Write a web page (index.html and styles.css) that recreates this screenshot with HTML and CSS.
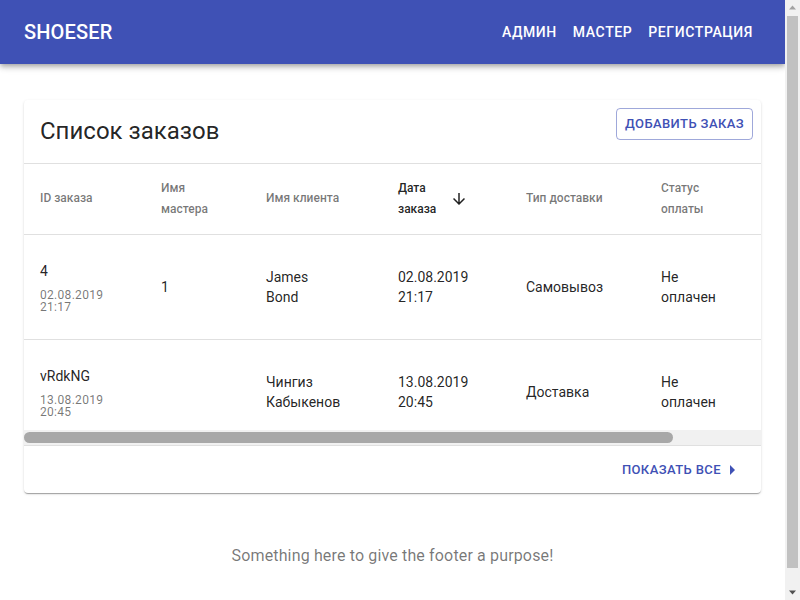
FILE: index.html
```html
<!DOCTYPE html>
<html lang="ru">
<head>
<meta charset="utf-8">
<title>Shoeser</title>
<link rel="stylesheet" href="styles.css">
</head>
<body>
<header class="appbar">
  <div class="brand">SHOESER</div>
  <nav class="nav">
    <a class="nav-link" href="#">Админ</a>
    <a class="nav-link" href="#">Мастер</a>
    <a class="nav-link" href="#">Регистрация</a>
  </nav>
</header>
<main class="main">
  <section class="card">
    <div class="card-head">
      <h1 class="card-title">Список заказов</h1>
      <button class="btn-outlined" type="button">Добавить заказ</button>
    </div>
    <div class="table-wrap">
      <table class="orders">
        <colgroup>
          <col class="c1"><col class="c2"><col class="c3"><col class="c4"><col class="c5"><col class="c6"><col class="c7">
        </colgroup>
        <thead>
          <tr>
            <th class="p1">ID заказа</th>
            <th class="p2">Имя мастера</th>
            <th class="p3">Имя клиента</th>
            <th class="p4 active">
              <span class="sort">
                <span class="sort-text">Дата заказа</span>
                <svg class="sort-icon" viewBox="0 0 24 24" width="18" height="18"><path d="M20 12l-1.41-1.41L13 16.17V4h-2v12.17l-5.58-5.59L4 12l8 8 8-8z"/></svg>
              </span>
            </th>
            <th class="p5">Тип доставки</th>
            <th class="p6">Статус оплаты</th>
            <th class="p7"></th>
          </tr>
        </thead>
        <tbody>
          <tr>
            <td class="p1"><div class="oid">4</div><div class="odate">02.08.2019 21:17</div></td>
            <td class="p2">1</td>
            <td class="p3">James Bond</td>
            <td class="p4">02.08.2019 21:17</td>
            <td class="p5">Самовывоз</td>
            <td class="p6">Не оплачен</td>
            <td class="p7"></td>
          </tr>
          <tr>
            <td class="p1"><div class="oid">vRdkNG</div><div class="odate">13.08.2019 20:45</div></td>
            <td class="p2"></td>
            <td class="p3">Чингиз Кабыкенов</td>
            <td class="p4">13.08.2019 20:45</td>
            <td class="p5">Доставка</td>
            <td class="p6">Не оплачен</td>
            <td class="p7"></td>
          </tr>
        </tbody>
      </table>
    </div>
    <div class="hscroll"><div class="hscroll-thumb" style="width: 88%"></div></div>
    <div class="card-foot">
      <button class="btn-text" type="button">Показать все
        <svg class="btn-icon" viewBox="0 0 24 24" width="24" height="24"><path d="M10 17l5-5-5-5v10z"/></svg>
      </button>
    </div>
  </section>
</main>
<footer class="footer">
  <p class="footer-text">Something here to give the footer a purpose!</p>
</footer>
<div class="vscroll" aria-hidden="true">
  <div class="vs-btn"><svg viewBox="0 0 15 15" width="15" height="15"><path class="vs-up" d="M4 9.5h7L7.5 5.5z"/></svg></div>
  <div class="vs-thumb"></div>
  <div class="vs-space"></div>
  <div class="vs-btn"><svg viewBox="0 0 15 15" width="15" height="15"><path class="vs-down" d="M4 5.5h7L7.5 9.5z"/></svg></div>
</div>
</body>
</html>
```

FILE: styles.css
```css
* { box-sizing: border-box; }
html, body { margin: 0; padding: 0; }
body {
  font-family: Roboto, "Noto Sans", "Liberation Sans", sans-serif;
  background: #fff;
  color: rgba(0,0,0,0.87);
  margin-right: 15px;
}
.vscroll {
  position: fixed;
  top: 0;
  right: 0;
  width: 15px;
  height: 100vh;
  background: #f1f1f1;
  display: flex;
  flex-direction: column;
  z-index: 10;
}
.vs-btn { height: 15px; flex: none; }
.vs-btn svg { display: block; }
.vs-up { fill: #a3a3a3; }
.vs-down { fill: #505050; }
.vs-thumb {
  height: 552px;
  margin: 1px 2px 0;
  background: #c1c1c1;
  flex: none;
}
.vs-space { flex: 1; }
.appbar {
  height: 64px;
  background: #3f51b5;
  color: #fff;
  display: flex;
  align-items: center;
  justify-content: space-between;
  padding: 0 24px;
  box-shadow: 0 2px 4px -1px rgba(0,0,0,0.2), 0 4px 5px 0 rgba(0,0,0,0.14), 0 1px 10px 0 rgba(0,0,0,0.12);
  position: relative;
  z-index: 2;
}
.brand {
  font-size: 20px;
  font-weight: 500;
  letter-spacing: 0.15px;
  line-height: 32px;
}
.nav { display: flex; }
.nav-link {
  color: #fff;
  text-decoration: none;
  text-transform: uppercase;
  font-size: 14px;
  font-weight: 500;
  letter-spacing: 0.6px;
  padding: 6px 8px;
  line-height: 24px;
}
.main { padding: 36px 24px 0; }
.card {
  background: #fff;
  border-radius: 4px;
  box-shadow: 0 2px 1px -1px rgba(0,0,0,0.2), 0 1px 1px 0 rgba(0,0,0,0.14), 0 1px 3px 0 rgba(0,0,0,0.12);
  overflow: hidden;
}
.card-head {
  height: 64px;
  display: flex;
  justify-content: space-between;
  align-items: flex-start;
  padding: 8px 8px 0 16px;
  border-bottom: 1px solid #e0e0e0;
}
.card-title {
  margin: 7px 0 0;
  font-size: 24px;
  font-weight: 400;
  line-height: 32px;
  color: rgba(0,0,0,0.87);
}
.btn-outlined {
  font-family: inherit;
  background: transparent;
  border: 1px solid rgba(63,81,181,0.5);
  border-radius: 4px;
  color: #3f51b5;
  text-transform: uppercase;
  font-size: 13px;
  font-weight: 500;
  letter-spacing: 0.4px;
  line-height: 20px;
  padding: 5px 8px;
  height: 32px;
}
.table-wrap {
  height: 266px;
  overflow: hidden;
}
.hscroll {
  height: 15px;
  background: #f1f1f1;
  padding: 2px 0;
}
.hscroll-thumb {
  height: 11px;
  background: #a8a8a8;
  border-radius: 6px;
}
.orders {
  width: 837px;
  table-layout: fixed;
  border-collapse: collapse;
}
.c1 { width: 121px; }
.c2 { width: 105px; }
.c3 { width: 132px; }
.c4 { width: 128px; }
.c5 { width: 135px; }
.c6 { width: 132px; }
.c7 { width: 84px; }
.orders th, .orders td {
  text-align: left;
  vertical-align: middle;
  border-bottom: 1px solid #e0e0e0;
  padding: 4px 24px 4px 16px;
}
.orders th {
  height: 70px;
  font-size: 12px;
  font-weight: 500;
  line-height: 21px;
  color: rgba(0,0,0,0.54);
}
.orders th.active { color: rgba(0,0,0,0.87); }
.orders td {
  height: 105px;
  font-size: 14px;
  font-weight: 400;
  line-height: 20px;
  color: rgba(0,0,0,0.87);
}
.orders .p3 { padding-right: 40px; }
.orders .p4 { padding-right: 38px; }
.orders .p5 { padding-right: 32px; }
.orders .p6 { padding-right: 56px; }
.sort { display: flex; align-items: center; }
.sort-text { flex: 1; }
.sort-icon { fill: rgba(0,0,0,0.87); margin: 0 4px; flex: none; }
.oid { font-size: 14px; line-height: 20px; }
.odate {
  margin-top: 8px;
  font-size: 12px;
  line-height: 12px;
  color: rgba(0,0,0,0.54);
  letter-spacing: 0.3px;
}
.card-foot {
  height: 48px;
  display: flex;
  justify-content: flex-end;
  align-items: center;
  padding: 0 16px;
  border-top: 1px solid #e0e0e0;
}
.btn-text {
  font-family: inherit;
  background: transparent;
  border: 0;
  color: #3f51b5;
  text-transform: uppercase;
  font-size: 13px;
  font-weight: 500;
  letter-spacing: 0.4px;
  line-height: 22px;
  padding: 4px 0 4px 5px;
  display: flex;
  align-items: center;
}
.btn-icon { fill: #3f51b5; margin-left: -1px; margin-right: 1px; }
.footer { padding: 51px 0 48px; }
.footer-text {
  margin: 0;
  text-align: center;
  font-size: 16px;
  line-height: 24px;
  letter-spacing: 0.15px;
  color: rgba(0,0,0,0.54);
}
```
